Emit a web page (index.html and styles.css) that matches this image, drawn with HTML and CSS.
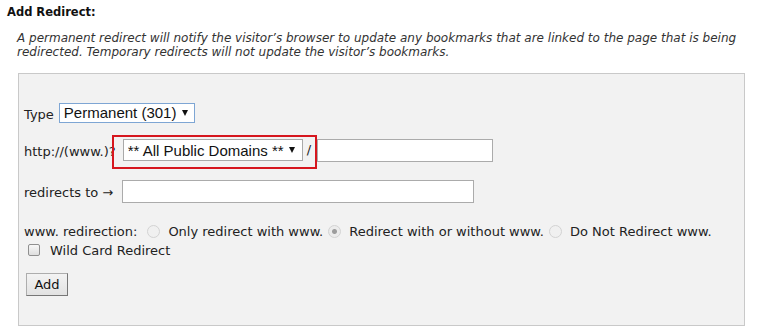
FILE: index.html
```html
<!DOCTYPE html>
<html>
<head>
	<meta charset="utf-8">
	<title>Add Redirect</title>
	<link rel="stylesheet" href="styles.css">
</head>
<body>
<div class="page">
	<h3 class="heading">Add Redirect:</h3>
	<p class="note">A permanent redirect will notify the visitor’s browser to update any bookmarks that are linked to the page that is being redirected. Temporary redirects will not update the visitor’s bookmarks.</p>

	<form class="panel">
		<div class="row row-type">
			<label class="label">Type</label>
			<span class="select select-type">
				<select>
					<option>Permanent (301)</option>
					<option>Temporary (302)</option>
				</select>
			</span>
		</div>

		<div class="row row-domain">
			<span class="label label-domain">http://(www.)?</span>
			<span class="mark">
				<span class="select select-domain">
					<select>
						<option>** All Public Domains **</option>
					</select>
				</span>
				<span class="slash">/</span>
			</span>
			<input class="field field-path" type="text">
		</div>

		<div class="row row-target">
			<label class="label label-target">redirects to →</label>
			<input class="field field-target" type="text">
		</div>

		<div class="row row-www">
			<span class="label">www. redirection:</span>
			<input class="radio" type="radio" name="www" disabled>
			<span class="option">Only redirect with www.</span>
			<input class="radio" type="radio" name="www" checked disabled>
			<span class="option">Redirect with or without www.</span>
			<input class="radio" type="radio" name="www" disabled>
			<span class="option">Do Not Redirect www.</span>
		</div>

		<div class="row row-wild">
			<input class="check" type="checkbox" id="wild">
			<label for="wild">Wild Card Redirect</label>
		</div>

		<div class="row row-add">
			<button class="btn" type="button">Add</button>
		</div>
	</form>
</div>
</body>
</html>
```

FILE: styles.css
```css
body{
	margin: 0;
	background-color: #fff;
	color: #222;
	font-family: "DejaVu Sans", Verdana, sans-serif;
	font-size: 13px;
}
.page{
	padding: 5px 0 0 7px;
	width: 738px;
}
.heading{
	margin: 0;
	font-size: 11.5px;
	line-height: 14px;
	font-weight: bold;
	color: #111;
}
.note{
	margin: 12px 0 0 10px;
	font-size: 12px;
	line-height: 14px;
	font-style: italic;
	color: #333;
}
.panel{
	margin: 14px 0 0 11px;
	width: 720px;
	padding: 29px 0 29px 5px;
	border: 1px solid #c9c9c9;
	background-color: #f2f2f2;
}
.row{
	display: flex;
	align-items: center;
}
.label{
	margin-right: 5px;
}

/* selects with the old style arrow */
.select{
	position: relative;
	display: inline-block;
}
.select select{
	appearance: none;
	-webkit-appearance: none;
	margin: 0;
	padding: 0 12px 0 4px;
	background-color: #fff;
	font-family: "Liberation Sans", Arial, sans-serif;
	font-size: 15px;
	color: #111;
	border-radius: 0;
}
.select:after{
	content: "";
	position: absolute;
	right: 7px;
	top: 50%;
	margin-top: -3px;
	border-left: 3.5px solid transparent;
	border-right: 3.5px solid transparent;
	border-top: 6px solid #111;
	pointer-events: none;
}
.select-type select{
	width: 136px;
	height: 20px;
	line-height: 18px;
	border: 1px solid #7ea6d4;
}
.select-domain select{
	width: 180px;
	height: 22px;
	border: 1px solid #a9a9a9;
}
.select-domain:after{
	right: 8px;
}

.row-type{
	height: 20px;
}
.row-type .label{
	margin-right: 5px;
	padding-top: 2px;
}

.row-domain{
	margin-top: 12px;
	align-items: flex-start;
	height: 34px;
}
.label-domain{
	line-height: 34px;
	margin-right: 0;
}
.mark{
	display: flex;
	align-items: center;
	margin-left: -4px;
	padding: 2px 4px 6px 9px;
	border: 2px solid #d6161e;
}
.slash{
	margin-left: 4px;
	padding-bottom: 1px;
}
.field{
	margin: 0;
	padding: 0 3px;
	background-color: #fff;
	border: 1px solid #ababab;
	font-family: "DejaVu Sans", Verdana, sans-serif;
	font-size: 13px;
}
.field-path{
	margin-top: 4px;
	width: 176px;
	height: 23px;
	box-sizing: border-box;
}
.row-target{
	margin-top: 11px;
	height: 23px;
}
.label-target{
	width: 98px;
	margin-right: 0;
	padding-top: 1px;
}
.field-target{
	width: 352px;
	height: 23px;
	box-sizing: border-box;
}

.row-www{
	margin-top: 20px;
	height: 16px;
}
.radio{
	appearance: none;
	-webkit-appearance: none;
	width: 13px;
	height: 13px;
	margin: 0 8px 0 5px;
	border: 1px solid #d3d3d3;
	border-radius: 50%;
	background-color: #f0f0f0;
}
.radio:checked{
	background: radial-gradient(circle, #9d9d9d 0, #9d9d9d 2px, #ececec 3px);
}
.option{
	margin-right: 0;
}

.row-wild{
	margin-top: 3px;
	height: 16px;
}
.check{
	appearance: none;
	-webkit-appearance: none;
	width: 12px;
	height: 12px;
	margin: 0 10px 0 4px;
	border: 1px solid #8f8f8f;
	border-radius: 2px;
	background: linear-gradient(#f7f7f7, #dedede);
}

.row-add{
	margin-top: 15px;
}
.btn{
	margin-left: 2px;
	width: 42px;
	height: 23px;
	padding: 0;
	border: 1px solid #adadad;
	border-right-color: #777;
	border-bottom-color: #777;
	background: linear-gradient(#f3f3f3, #e2e2e2);
	font-family: "DejaVu Sans", Verdana, sans-serif;
	font-size: 13px;
	color: #111;
}
```
